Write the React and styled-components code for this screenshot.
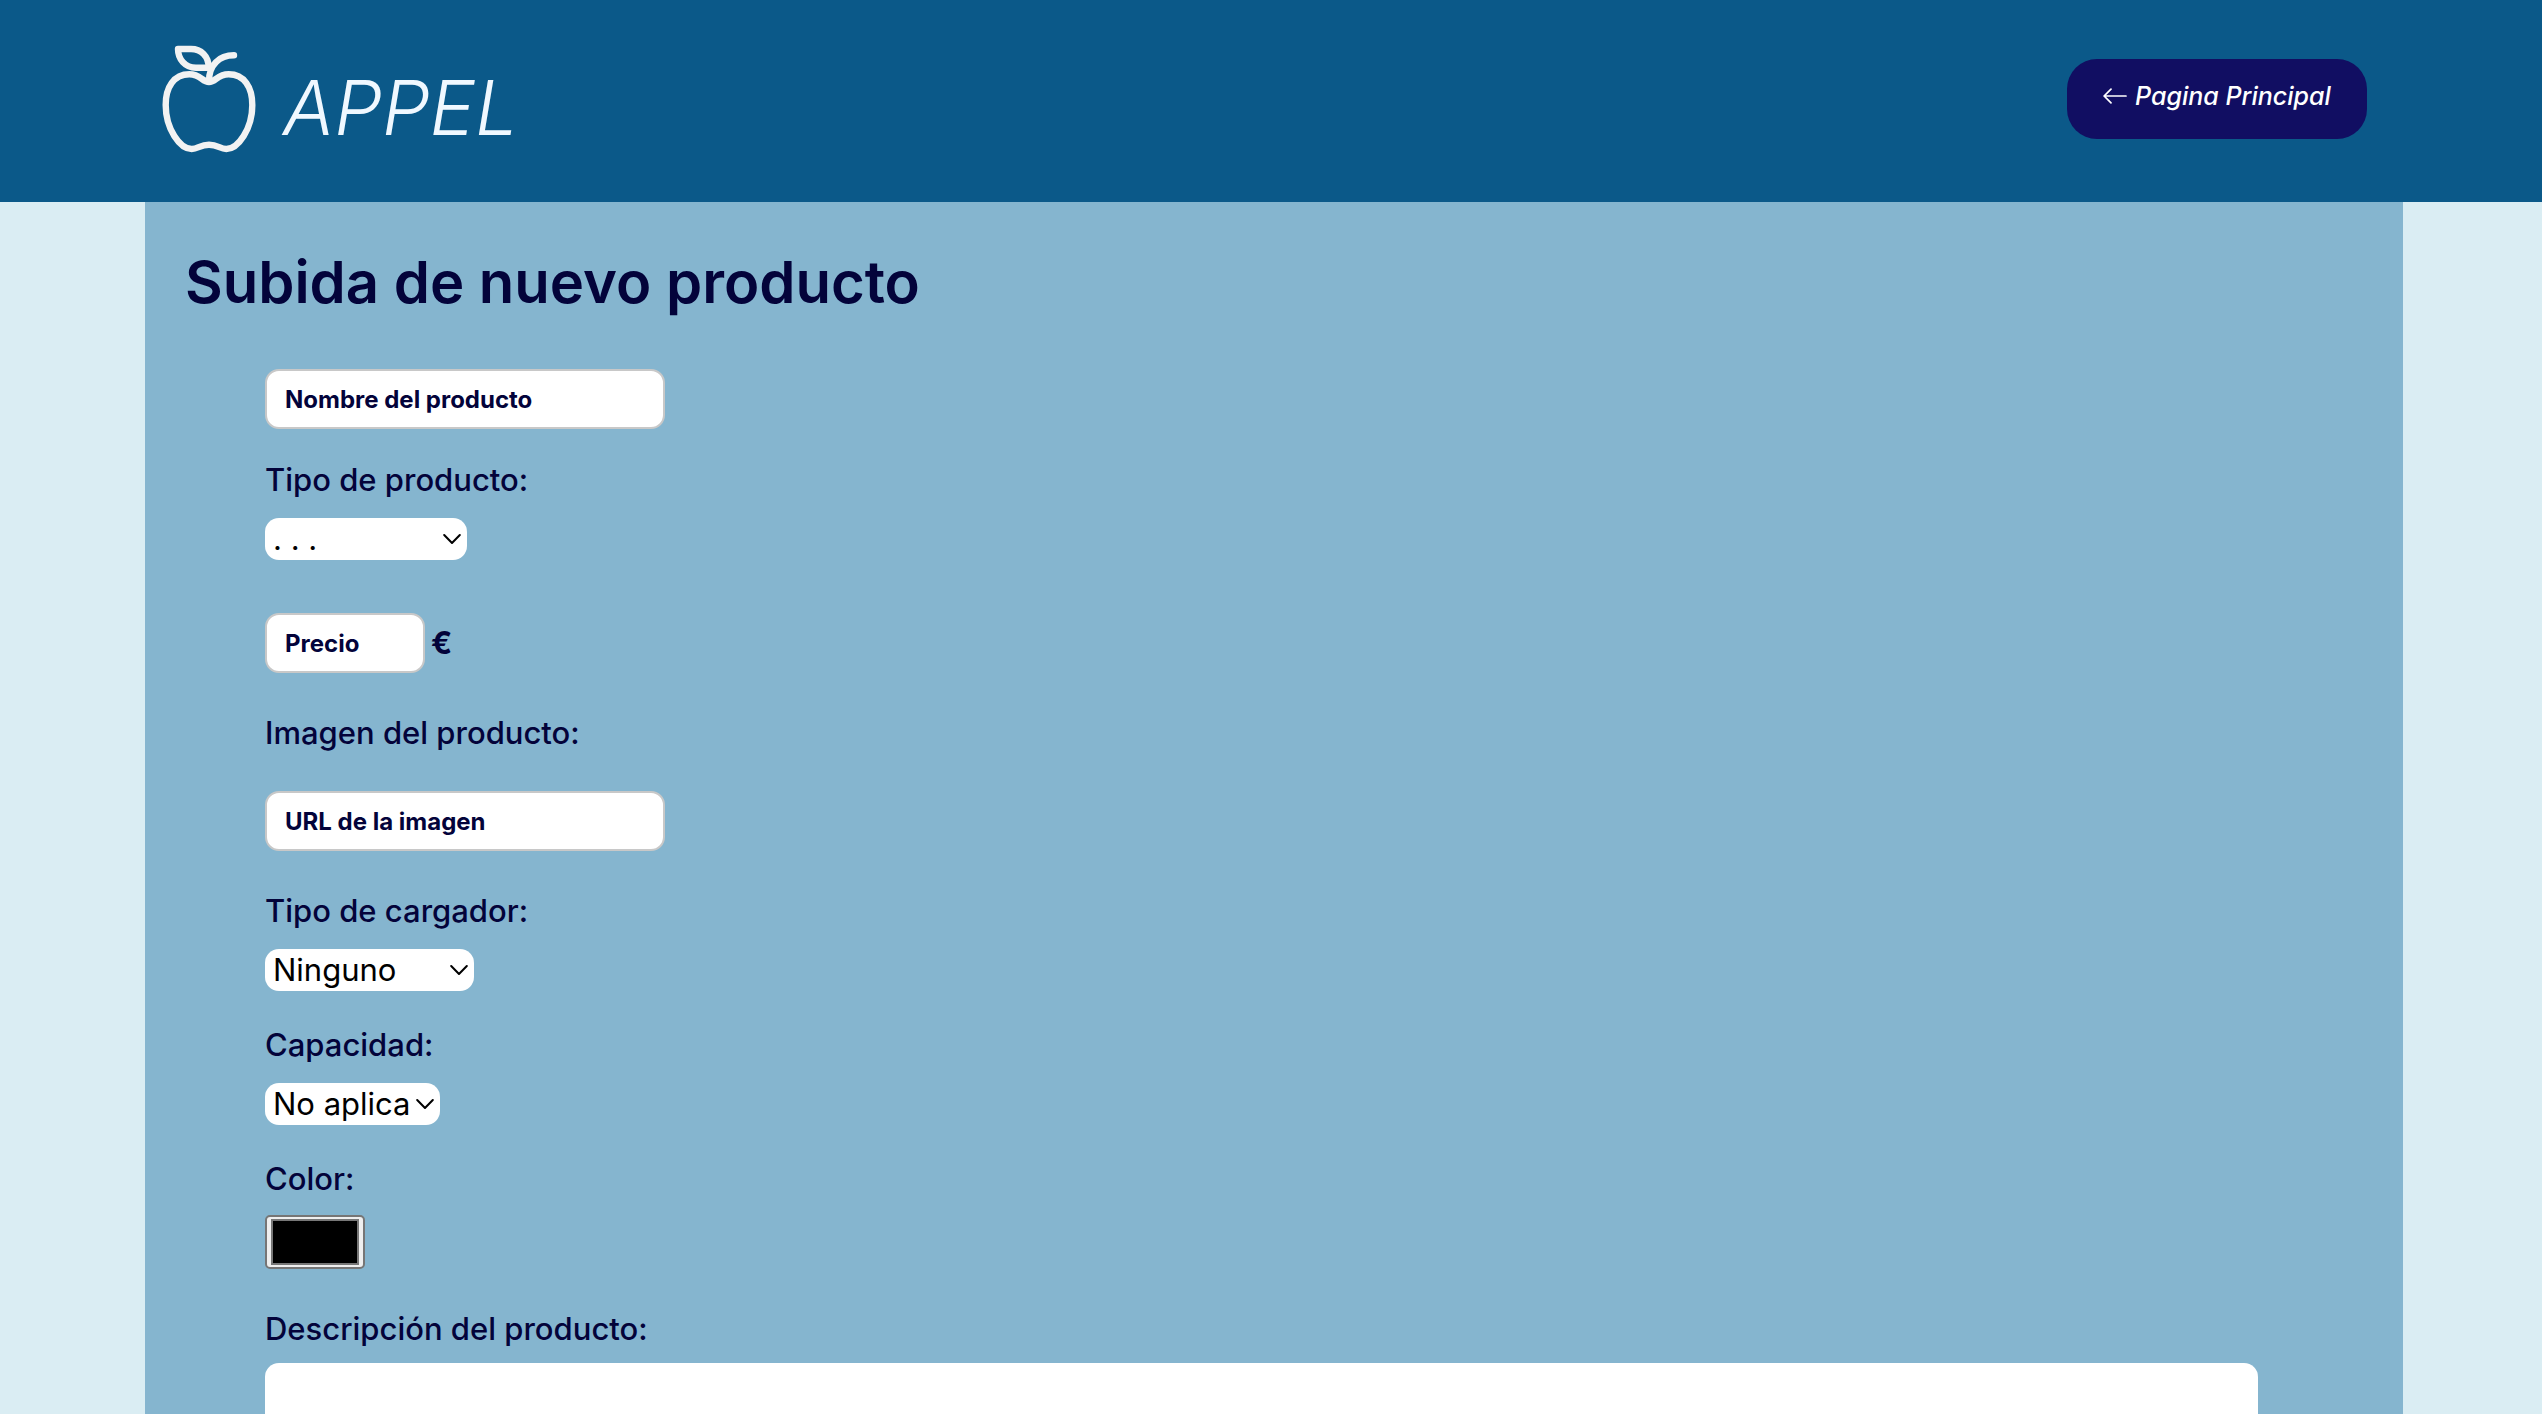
import React from "react";
import styled, { createGlobalStyle } from "styled-components";

const GlobalStyle = createGlobalStyle`
  * { box-sizing: border-box; }
  body {
    margin: 0;
    background: #daedf3;
    color: #03033a;
    font-family: Inter, "Liberation Sans", sans-serif;
  }
`;

const Header = styled.header`
  display: flex;
  align-items: center;
  justify-content: space-between;
  height: 202px;
  padding: 0 175px 4px 161px;
  background: #0b5989;
`;

const Brand = styled.a`
  display: flex;
  align-items: center;
  gap: 26px;
  color: aliceblue;
  text-decoration: none;
`;

const BrandName = styled.span`
  padding-top: 16px;
  font-size: 76px;
  line-height: 80px;
  font-weight: 300;
  font-style: italic;
`;

const HomeLink = styled.a`
  display: flex;
  align-items: center;
  justify-content: center;
  gap: 8px;
  width: 300px;
  height: 80px;
  padding-bottom: 6px;
  border-radius: 30px;
  background: #110e62;
  color: #fff;
  font-size: 25px;
  font-weight: 500;
  font-style: italic;
  text-decoration: none;
`;

const Panel = styled.main`
  margin: 0 139px 0 145px;
  padding: 40px;
  background: #85b5cf;
`;

const Title = styled.h1`
  margin: 0;
  font-size: 58px;
  line-height: 80px;
  font-weight: 600;
`;

const Form = styled.form`
  display: flex;
  flex-direction: column;
  align-items: flex-start;
  gap: 40px;
  padding: 47px 0 40px 80px;
`;

const Group = styled.div`
  display: flex;
  flex-direction: column;
  align-items: flex-start;
  width: 100%;
  gap: ${(p) => p.$gap}px;
  margin-top: ${(p) => p.$top || 0}px;
`;

const Label = styled.label`
  font-size: 31px;
  line-height: 40px;
  font-weight: 500;
`;

const TextInput = styled.input`
  width: ${(p) => (p.$short ? 160 : 400)}px;
  height: 60px;
  padding: 0 18px;
  border: 2px solid #c8c8c8;
  border-radius: 14px;
  background: #fff;
  color: #03033a;
  font: 700 24px Inter, sans-serif;
  &::placeholder { color: #03033a; opacity: 1; }
`;

const PriceRow = styled.div`
  display: flex;
  align-items: center;
  gap: 6px;
  margin-top: 13px;
`;

const Currency = styled.span`
  font-size: 31px;
  line-height: 40px;
  font-weight: 700;
`;

const SelectBox = styled.div`
  display: grid;
  align-items: center;
  width: ${(p) => p.$width}px;
  & > * { grid-area: 1 / 1; }
`;

const SelectInput = styled.select`
  appearance: none;
  width: 100%;
  height: 42px;
  padding: 0 8px;
  border: 0;
  border-radius: 14px;
  background: #fff;
  color: #000;
  font: 400 31px/42px Inter, sans-serif;
`;

const Chevron = styled.svg`
  justify-self: end;
  margin-right: 6px;
  pointer-events: none;
`;

const ColorInput = styled.input`
  width: 100px;
  height: 54px;
  padding: 2px 4px;
  border: 2px solid #767676;
  border-radius: 5px;
  background: #efefef;
  &::-webkit-color-swatch-wrapper { padding: 0; }
  &::-webkit-color-swatch { border: 2px solid #777; border-radius: 0; }
`;

const Description = styled.textarea`
  width: 95%;
  height: 200px;
  padding: 16px 20px;
  border: 0;
  border-radius: 14px;
  background: #fff;
  resize: none;
  font: 400 24px Inter, sans-serif;
`;

function Apple() {
  return (
    <svg width="96" height="108" viewBox="0 0 96 108" fill="none" stroke="#f2f2f2" strokeWidth="6.4" strokeLinecap="round" strokeLinejoin="round" aria-hidden="true">
      <path d="M48 37C41 37 40 29.3 28.3 29.3C13 29.3 4.7 42 4.7 60C4.7 84 19 104 30.7 104C37 104 39 99.7 48 99.7C57 99.7 59 104 65.3 104C77 104 91.3 84 91.3 60C91.3 42 83 29.3 67.7 29.3C56 29.3 55 37 48 37Z" />
      <path d="M17 4H30C40 4 47.7 11 47.7 22.7H35C24 22.7 17 14 17 4Z" />
      <path d="M48 36C48 20 58 10.3 73 10.3" />
    </svg>
  );
}

function Select({ id, width, children }) {
  return (
    <SelectBox $width={width}>
      <SelectInput id={id}>{children}</SelectInput>
      <Chevron width="18" height="12" viewBox="0 0 18 12" fill="none" stroke="#000" strokeWidth="2" strokeLinecap="round" strokeLinejoin="round" aria-hidden="true">
        <path d="M1.2 2L9 10L16.8 2" />
      </Chevron>
    </SelectBox>
  );
}

export default function App() {
  return (
    <>
      <GlobalStyle />
      <Header>
        <Brand href="#">
          <Apple />
          <BrandName>APPEL</BrandName>
        </Brand>
        <HomeLink href="#">
          <svg width="24" height="16" viewBox="0 0 24 16" fill="none" stroke="#fff" strokeWidth="1.7" strokeLinecap="round" aria-hidden="true">
            <path d="M23 8H1.5M8 1.2L1.2 8L8 14.8" />
          </svg>
          Pagina Principal
        </HomeLink>
      </Header>
      <Panel>
        <Title>Subida de nuevo producto</Title>
        <Form>
          <TextInput type="text" aria-label="Nombre del producto" placeholder="Nombre del producto" />
          <Group $gap={18} $top={-9}>
            <Label htmlFor="tipo">Tipo de producto:</Label>
            <Select id="tipo" width={202}>
              <option>. . .</option>
            </Select>
          </Group>
          <PriceRow>
            <TextInput $short type="text" aria-label="Precio" placeholder="Precio" />
            <Currency>€</Currency>
          </PriceRow>
          <Group $gap={38}>
            <Label htmlFor="imagen">Imagen del producto:</Label>
            <TextInput id="imagen" type="text" placeholder="URL de la imagen" />
          </Group>
          <Group $gap={18}>
            <Label htmlFor="cargador">Tipo de cargador:</Label>
            <Select id="cargador" width={209}>
              <option>Ninguno</option>
            </Select>
          </Group>
          <Group $gap={18} $top={-6}>
            <Label htmlFor="capacidad">Capacidad:</Label>
            <Select id="capacidad" width={175}>
              <option>No aplica</option>
            </Select>
          </Group>
          <Group $gap={16} $top={-6}>
            <Label htmlFor="color">Color:</Label>
            <ColorInput id="color" type="color" defaultValue="#000000" />
          </Group>
          <Group $gap={14}>
            <Label htmlFor="descripcion">Descripción del producto:</Label>
            <Description id="descripcion" />
          </Group>
        </Form>
      </Panel>
    </>
  );
}
